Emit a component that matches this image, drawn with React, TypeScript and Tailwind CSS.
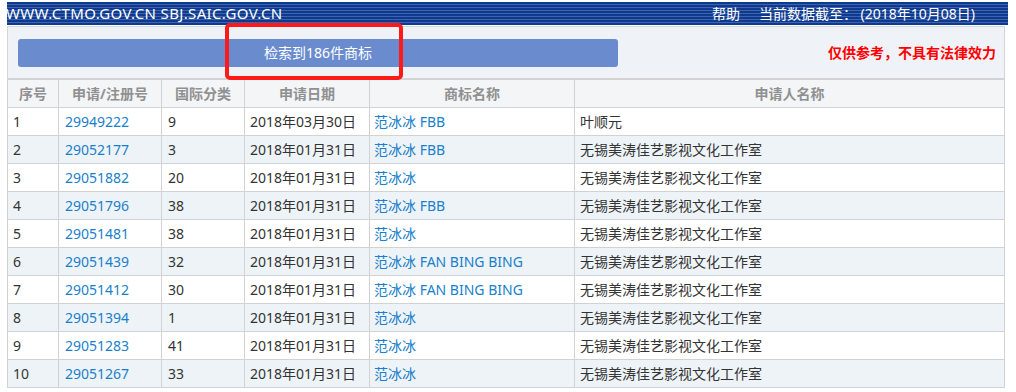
import React from "react";

const rows = [
  ["1", "29949222", "9", "2018年03月30日", "范冰冰 FBB", "叶顺元"],
  ["2", "29052177", "3", "2018年01月31日", "范冰冰 FBB", "无锡美涛佳艺影视文化工作室"],
  ["3", "29051882", "20", "2018年01月31日", "范冰冰", "无锡美涛佳艺影视文化工作室"],
  ["4", "29051796", "38", "2018年01月31日", "范冰冰 FBB", "无锡美涛佳艺影视文化工作室"],
  ["5", "29051481", "38", "2018年01月31日", "范冰冰", "无锡美涛佳艺影视文化工作室"],
  ["6", "29051439", "32", "2018年01月31日", "范冰冰 FAN BING BING", "无锡美涛佳艺影视文化工作室"],
  ["7", "29051412", "30", "2018年01月31日", "范冰冰 FAN BING BING", "无锡美涛佳艺影视文化工作室"],
  ["8", "29051394", "1", "2018年01月31日", "范冰冰", "无锡美涛佳艺影视文化工作室"],
  ["9", "29051283", "41", "2018年01月31日", "范冰冰", "无锡美涛佳艺影视文化工作室"],
  ["10", "29051267", "33", "2018年01月31日", "范冰冰", "无锡美涛佳艺影视文化工作室"],
];

const headers = ["序号", "申请/注册号", "国际分类", "申请日期", "商标名称", "申请人名称"];

export default function App() {
  return (
    <div
      className="w-[1016px] h-[392px] overflow-hidden bg-white pl-[7px] pr-[8px] pt-[2px] text-[14px] text-[#333]"
      style={{ fontFamily: '"Noto Sans", "Noto Sans CJK SC", sans-serif' }}
    >
      <div className="h-[23px] flex items-center justify-between text-white bg-[repeating-linear-gradient(to_bottom,#0d3a8e_0px,#0d3a8e_2px,#3f63ad_2px,#3f63ad_3px)] pr-[33px]">
        <span className="text-[15px] leading-none tracking-[0.35px] -ml-[1px]">WWW.CTMO.GOV.CN SBJ.SAIC.GOV.CN</span>
        <div className="flex gap-[19px] text-[14px] leading-none">
          <span>帮助</span>
          <span>当前数据截至： (2018年10月08日)</span>
        </div>
      </div>
      <div className="relative h-[53px] mt-[1px] bg-[#eff3f8] border border-[#d4d4d4] mr-[3px] flex items-center pl-[10px] pr-[8px] justify-between">
        <div className="w-[600px] h-[28px] rounded-[3px] bg-[#6a8ccf] flex items-center justify-center text-white text-[14px]">
          检索到186件商标
        </div>
        <span className="text-[#ff0000] font-bold text-[14px]">仅供参考，不具有法律效力</span>
        <div className="absolute left-[217px] top-[-4px] w-[178px] h-[57px] border-[4px] border-[#ff1a1a] rounded-[5px]" />
      </div>
      <table className="border-collapse mr-[3px] w-[998px] table-fixed">
        <colgroup>
          <col className="w-[51px]" />
          <col className="w-[103px]" />
          <col className="w-[83px]" />
          <col className="w-[125px]" />
          <col className="w-[205px]" />
          <col />
        </colgroup>
        <thead>
          <tr className="h-[28px] bg-[#f3f5f7]">
            {headers.map((h) => (
              <th key={h} className="border border-[#d2d2d2] font-bold text-[#909090] text-center text-[14px] p-0">
                {h}
              </th>
            ))}
          </tr>
        </thead>
        <tbody>
          {rows.map((r, i) => (
            <tr key={r[0]} className={`h-[28px] ${i % 2 === 1 ? "bg-[#eef3f8]" : "bg-white"}`}>
              <td className="border border-[#d2d2d2] px-[5px] py-0">{r[0]}</td>
              <td className="border border-[#d2d2d2] px-[6px] py-0 text-[#1a7fcc]">{r[1]}</td>
              <td className="border border-[#d2d2d2] px-[6px] py-0">{r[2]}</td>
              <td className="border border-[#d2d2d2] px-[5px] py-0">{r[3]}</td>
              <td className="border border-[#d2d2d2] px-[4px] py-0 text-[#1a7fcc]">{r[4]}</td>
              <td className="border border-[#d2d2d2] px-[5px] py-0">{r[5]}</td>
            </tr>
          ))}
        </tbody>
      </table>
    </div>
  );
}
